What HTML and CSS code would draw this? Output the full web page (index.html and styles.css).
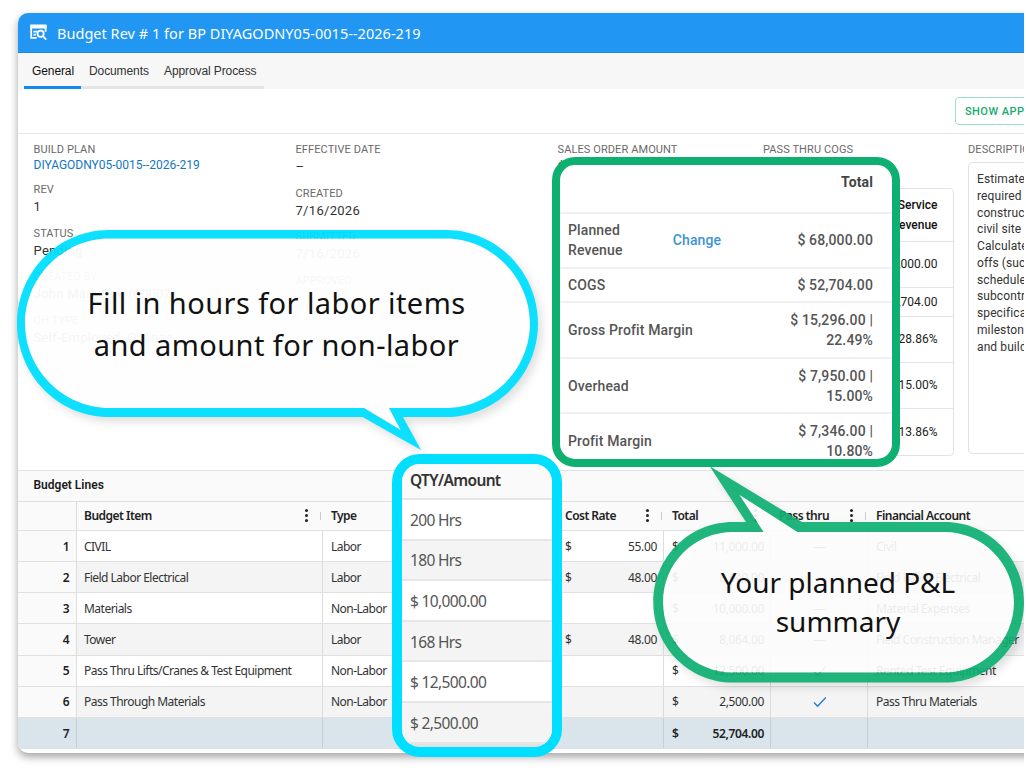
FILE: index.html
```html
<!DOCTYPE html>
<html lang="en">
<head>
  <meta charset="UTF-8" />
  <meta name="viewport" content="width=device-width, initial-scale=1.0"/>
  <title>Budget Rev # 1</title>
  <link rel="stylesheet" href="styles.css">
</head>
<body>
<div class="stage">
  <main class="window">
    <header class="title-bar">
      <svg class="title-icon" width="17" height="17" viewBox="0 0 17 17" fill="none" stroke="#fff" stroke-width="1.8">
        <path d="M1.2 14.5V1.2M15.6 1.2v6.6M.3 13.9h6.4M3.4 7.6h3.6M3.4 10.6h2.6"/>
        <path d="M.3 2.4h16.2" stroke-width="4"/>
        <circle cx="10.6" cy="9.8" r="3.1"/>
        <path d="M12.8 12l3.4 3.6"/>
      </svg>
      <h1>Budget Rev # 1 for BP DIYAGODNY05-0015--2026-219</h1>
    </header>

    <nav class="tabs">
      <a class="tab active">General</a>
      <a class="tab tab-docs">Documents</a>
      <a class="tab tab-approval">Approval Process</a>
    </nav>

    <div class="toolbar"><button class="show-btn">SHOW APPROVALS</button></div>

    <section class="details">
      <div class="col col-plan">
        <div class="field first"><label>BUILD PLAN</label><a class="link">DIYAGODNY05-0015--2026-219</a></div>
        <div class="field"><label>REV</label><span>1</span></div>
        <div class="field"><label>STATUS</label><span>Pending</span></div>
        <div class="field"><label>CREATED BY</label><span>John Mark Doe (00002)</span></div>
        <div class="field"><label>OH TYPE</label><span>Self-Employed &nbsp;<a>Change</a></span></div>
      </div>
      <div class="col col-dates">
        <div class="field"><label>EFFECTIVE DATE</label><span>–</span></div>
        <div class="field"><label>CREATED</label><span>7/16/2026</span></div>
        <div class="field"><label>SUBMITTED</label><span>7/16/2026</span></div>
        <div class="field"><label>APPROVED</label><span>–</span></div>
      </div>
      <div class="col col-money">
        <div class="money-row">
          <div class="field"><label>SALES ORDER AMOUNT</label><span>$ 68,000.00</span></div>
          <div class="field"><label>PASS THRU COGS</label></div>
        </div>
        <div class="service">
          <div class="service-row h53 head">Service<br>Revenue</div>
          <div class="service-row h46">$ 53,000.00</div>
          <div class="service-row h29">$ 37,704.00</div>
          <div class="service-row h46">28.86%</div>
          <div class="service-row h46">15.00%</div>
          <div class="service-row h46">13.86%</div>
        </div>
      </div>
      <div class="col col-desc">
        <label>DESCRIPTION</label>
        <div class="desc-box">Estimate<br>required to<br>construct<br>civil site p<br>Calculate<br>offs (such<br>schedule<br>subcontr<br>specifica<br>milestone<br>and build</div>
      </div>
    </section>

    <section class="lines">
      <h2>Budget Lines</h2>
      <div class="row row-head">
        <div class="c num"></div>
        <div class="c item">Budget Item<i class="dots"></i><i class="tick"></i></div>
        <div class="c type">Type</div>
        <div class="c qty"></div>
        <div class="c rate">Cost Rate<i class="dots"></i><i class="tick"></i></div>
        <div class="c total">Total<i class="dots"></i></div>
        <div class="c pass">Pass thru<i class="dots"></i><i class="tick"></i></div>
        <div class="c acct">Financial Account</div>
      </div>
      <div class="row">
        <div class="c num">1</div><div class="c item">CIVIL</div><div class="c type">Labor</div><div class="c qty"></div>
        <div class="c rate"><b>$</b>55.00</div><div class="c total"><b>$</b>11,000.00</div><div class="c pass">—</div><div class="c acct">Civil</div>
      </div>
      <div class="row alt">
        <div class="c num">2</div><div class="c item">Field Labor Electrical</div><div class="c type">Labor</div><div class="c qty"></div>
        <div class="c rate"><b>$</b>48.00</div><div class="c total"><b>$</b>8,640.00</div><div class="c pass">—</div><div class="c acct">Field Labor Electrical</div>
      </div>
      <div class="row">
        <div class="c num">3</div><div class="c item">Materials</div><div class="c type">Non-Labor</div><div class="c qty"></div>
        <div class="c rate"></div><div class="c total"><b>$</b>10,000.00</div><div class="c pass">—</div><div class="c acct">Material Expenses</div>
      </div>
      <div class="row alt">
        <div class="c num">4</div><div class="c item">Tower</div><div class="c type">Labor</div><div class="c qty"></div>
        <div class="c rate"><b>$</b>48.00</div><div class="c total"><b>$</b>8,064.00</div><div class="c pass">—</div><div class="c acct">Field Construction Manager</div>
      </div>
      <div class="row">
        <div class="c num">5</div><div class="c item">Pass Thru Lifts/Cranes &amp; Test Equipment</div><div class="c type">Non-Labor</div><div class="c qty"></div>
        <div class="c rate"></div><div class="c total"><b>$</b>12,500.00</div>
        <div class="c pass"><svg width="14" height="12" viewBox="0 0 14 12"><path d="M1 6.5l3.6 3.7L12.8 1.4" fill="none" stroke="#1b80d8" stroke-width="1.4"/></svg></div>
        <div class="c acct">Rented Test Equipment</div>
      </div>
      <div class="row alt">
        <div class="c num">6</div><div class="c item">Pass Through Materials</div><div class="c type">Non-Labor</div><div class="c qty"></div>
        <div class="c rate"></div><div class="c total"><b>$</b>2,500.00</div>
        <div class="c pass"><svg width="14" height="12" viewBox="0 0 14 12"><path d="M1 6.5l3.6 3.7L12.8 1.4" fill="none" stroke="#1b80d8" stroke-width="1.4"/></svg></div>
        <div class="c acct">Pass Thru Materials</div>
      </div>
      <div class="row sum">
        <div class="c num">7</div><div class="c item"></div><div class="c type"></div><div class="c qty"></div>
        <div class="c rate"></div><div class="c total"><b>$</b>52,704.00</div><div class="c pass"></div><div class="c acct"></div>
      </div>
    </section>
  </main>

  <!-- speech bubbles -->
  <svg class="bubbles" width="1024" height="768" viewBox="0 0 1024 768">
    <g class="bubble-shadow">
      <path fill="#fff" fill-opacity=".95" d="M109 238.5H446C491 238.5 530 277 530 323.5S491 408 446 408H389L400.7 430L364 408H109C64 408 25 370 25 323.5S64 238.5 109 238.5Z"/>
      <path fill="#00dfff" fill-opacity=".95" fill-rule="evenodd" d="M109 230H446C497 230 538 272 538 323.5S497 417 446 417H403L421 450L362.5 417H109C58 417 17 375 17 323.5S58 230 109 230Z
        M109 238.5C64 238.5 25 277 25 323.5S64 408 109 408H364L400.7 430L389 408H446C491 408 530 370 530 323.5S491 238.5 446 238.5Z"/>
    </g>
    <g class="bubble-shadow">
      <path fill="#fff" fill-opacity=".9" d="M733 532H763.5L739.3 494.7L797.5 532H945C983 532 1014 563 1014 602.3S983 672.6 945 672.6H733C694 672.6 663 641 663 602.3S694 532 733 532Z"/>
      <path fill="#0eb072" fill-opacity=".92" fill-rule="evenodd" d="M733 522H746L709.5 466L802 522H945C989 522 1024 558 1024 602.3S989 682.6 945 682.6H733C689 682.6 653.3 647 653.3 602.3S689 522 733 522Z
        M733 532C694 532 663 563 663 602.3S694 672.6 733 672.6H945C983 672.6 1014 641 1014 602.3S983 532 945 532H797.5L739.3 494.7L763.5 532Z"/>
    </g>
  </svg>
  <p class="say say-hours">Fill in hours for labor items<br>and amount for non-labor</p>
  <p class="say say-summary">Your planned P&amp;L<br>summary</p>

  <!-- magnified P&L table -->
  <div class="pl-card">
    <div class="pl-row pl-head"><span></span><strong>Total</strong></div>
    <div class="pl-row h55"><span>Planned<br>Revenue</span><a>Change</a><span>$ 68,000.00</span></div>
    <div class="pl-row h35"><span>COGS</span><span>$ 52,704.00</span></div>
    <div class="pl-row h55"><span>Gross Profit Margin</span><span>$ 15,296.00 |<br>22.49%</span></div>
    <div class="pl-row h55"><span>Overhead</span><span>$ 7,950.00 |<br>15.00%</span></div>
    <div class="pl-row h55"><span>Profit Margin</span><span>$ 7,346.00 |<br>10.80%</span></div>
  </div>

  <!-- magnified QTY column -->
  <div class="qty-card">
    <div class="qty-row qty-head">QTY/Amount</div>
    <div class="qty-row">200 Hrs</div>
    <div class="qty-row alt">180 Hrs</div>
    <div class="qty-row">$ 10,000.00</div>
    <div class="qty-row alt">168 Hrs</div>
    <div class="qty-row">$ 12,500.00</div>
    <div class="qty-row alt">$ 2,500.00</div>
  </div>
</div>
</body>
</html>
```
FILE: styles.css
```css
* {
  box-sizing: border-box;
}

body {
  margin: 0;
  background: #fff;
  font-family: Roboto, sans-serif;
  color: #333;
}

.stage {
  position: relative;
  width: 1024px;
  height: 768px;
  padding: 13px 0 0 18px;
  overflow: hidden;
}

/* Main window, runs off the right edge */
.window {
  width: 1040px;
  height: 740px;
  border-radius: 10px;
  background: #fff;
  box-shadow: 0 4px 9px rgba(0, 0, 0, 0.36);
  overflow: hidden;
}

.title-bar {
  display: flex;
  align-items: center;
  height: 40px;
  padding-left: 12px;
  background: #2196f3;
  border-bottom: 1px solid #1687e2;
}

.title-bar h1 {
  margin: 0 0 0 10px;
  font: 400 14.5px "Noto Sans", sans-serif;
  letter-spacing: 0.03px;
  color: #fff;
}

.tabs {
  display: flex;
  height: 36px;
  padding-left: 6px;
  background: #f7f7f7;
}

.tab {
  padding: 11px 8px 0;
  font: 12px/15px "Liberation Sans", Arial, sans-serif;
  letter-spacing: -0.1px;
  border-bottom: 3px solid #e4e4e4;
  white-space: nowrap;
}

.tab.active {
  width: 57px;
  color: #111;
  border-color: #1289ee;
}

.tab-docs {
  width: 75px;
}

.tab-approval {
  width: 108px;
}

.toolbar {
  height: 45px;
  padding: 8px 0 0 937px;
  border-bottom: 1px solid #e6e6e6;
}

.show-btn {
  width: 140px;
  height: 28px;
  padding: 0 0 0 9px;
  border: 1px solid #9fdfc7;
  border-radius: 4px;
  background: #fff;
  color: #12ab6e;
  font: 500 11px Roboto, sans-serif;
  letter-spacing: 0.45px;
  text-align: left;
  white-space: nowrap;
}

/* Details */
.details {
  display: flex;
  height: 336px;
  padding: 9px 0 0 15.5px;
}

.col {
  flex: none;
}

label {
  display: block;
  font-size: 11px;
  line-height: 14px;
  letter-spacing: 0.1px;
  color: #6a6a6a;
  white-space: nowrap;
}

.field {
  height: 43.7px;
}

.field.first {
  height: 40px;
}

.field span {
  display: block;
  font-size: 13px;
  line-height: 20px;
  letter-spacing: 0.3px;
}

.field .link {
  display: block;
  font-size: 12px;
  line-height: 17px;
  color: #1277c4;
}

.field a {
  color: #1277c4;
}

.col-plan {
  width: 262px;
}

.col-dates {
  width: 262px;
}

.col-money {
  width: 410.5px;
}

.money-row {
  display: grid;
  grid-template-columns: 205.5px auto;
}

.service {
  width: 396px;
  margin-top: 1.5px;
  border: 1px solid #e2e2e2;
  border-radius: 4px;
}

.service-row {
  display: flex;
  align-items: center;
  justify-content: flex-end;
  padding-right: 15px;
  font-size: 12px;
  line-height: 20px;
  text-align: right;
  border-bottom: 1px solid #e4e4e4;
  color: #222;
}

.service-row:last-child {
  border-bottom: 0;
}

.head {
  font-weight: 500;
  color: #111;
}

.h53 { height: 52.5px; }
.h46 { height: 46px; }
.h29 { height: 29px; }

.desc-box {
  width: 160px;
  height: 292px;
  margin-top: 5px;
  padding: 8px;
  border: 1px solid #e2e2e2;
  border-radius: 4px;
  font-size: 12px;
  line-height: 16.75px;
  letter-spacing: 0.1px;
}

/* Budget lines grid */
.lines {
  font-family: "Noto Sans", "Open Sans", sans-serif;
  font-size: 12px;
}

.lines h2 {
  height: 32px;
  margin: 0;
  padding-left: 15.5px;
  font: 600 12px/29px Roboto, sans-serif;
  color: #1b1b1b;
  background: #fafafa;
  border-top: 1px solid #e2e2e2;
  border-bottom: 1px solid #dedede;
}

.row {
  display: flex;
  height: 31.17px;
  border-bottom: 1px solid #e0e0e0;
  letter-spacing: -0.52px;
}

.row-head {
  height: 29px;
  background: #fafafa;
  font-weight: 600;
  color: #222;
}

.row-head .c {
  padding-bottom: 1px;
}

.alt {
  background: #f4f4f4;
}

.sum {
  background: #dae4eb;
  font-weight: 600;
  color: #222;
}

.c {
  display: flex;
  flex: none;
  align-items: center;
  padding: 0 7px;
  border-right: 1px solid #dcdcdc;
  white-space: nowrap;
}

.sum .c {
  border-color: #c5d0d9;
}

.row-head .c {
  border-color: transparent;
}

.row-head .num {
  border-color: #dcdcdc;
}

.num {
  width: 59px;
  justify-content: flex-end;
  font-weight: 600;
  color: #222;
  background: #fafafa;
}

.sum .num {
  background: none;
}

.item { width: 246px; }
.type { width: 71px; padding-left: 8px; }
.qty { width: 153px; }
.rate { width: 117px; padding-left: 18px; }
.total { width: 107px; padding-left: 8px; }
.pass { width: 97px; padding-left: 8px; }
.acct { width: 190px; padding-left: 8px; }

.type,
.qty {
  border-right: 0;
}

/* amounts keep looser digits than the labels */
.row:not(.row-head) .rate,
.row:not(.row-head) .total {
  justify-content: flex-end;
  padding-right: 6px;
  letter-spacing: -0.35px;
}

.row:not(.row-head) .pass {
  justify-content: center;
}

.c b {
  margin-right: auto;
  font-weight: inherit;
}

.dots {
  width: 3px;
  height: 3px;
  margin: 0 12px 0 auto;
  border-radius: 50%;
  background: #222;
  box-shadow: 0 -5px #222, 0 5px #222;
}

.dots:last-child {
  margin-right: 6px;
}

.tick {
  width: 1.5px;
  height: 8px;
  margin-right: -6px;
  background: #ccc;
}

/* Callouts over the window */
.bubbles {
  position: absolute;
  left: 0;
  top: 0;
}

.bubble-shadow {
  filter: drop-shadow(4px 5px 4px rgba(0, 0, 0, 0.13));
}

.say {
  position: absolute;
  margin: 0;
  font-family: "Noto Sans", "Open Sans", sans-serif;
  color: #111;
  text-align: center;
  white-space: nowrap;
}

.say-hours {
  left: 26px;
  top: 282px;
  width: 501px;
  font-size: 29px;
  line-height: 42px;
  letter-spacing: 0.42px;
}

.say-summary {
  left: 663px;
  top: 563px;
  width: 350px;
  font-size: 28px;
  line-height: 39px;
}

.pl-card {
  position: absolute;
  left: 552px;
  top: 157px;
  width: 348px;
  height: 310px;
  border: 8px solid #0eb072;
  border-radius: 23px;
  background: #fff;
  overflow: hidden;
  font-size: 14px;
  font-weight: 500;
  line-height: 20px;
  letter-spacing: 0.13px;
  color: #555;
}

.pl-row {
  position: relative;
  display: flex;
  align-items: center;
  justify-content: space-between;
  padding: 0 19px 0 8px;
  border-bottom: 2px solid #f0f0f0;
}

.pl-row span:last-child {
  text-align: right;
}

.pl-row a {
  margin-left: -26px;
  color: #3c93d8;
}

.pl-head {
  height: 48.5px;
  padding-bottom: 13px;
  color: #444;
}

.h55 { height: 55.4px; }
.h35 { height: 34.6px; }

.qty-card {
  position: absolute;
  left: 392px;
  top: 454px;
  width: 170px;
  height: 303px;
  border: 10px solid #00dfff;
  border-radius: 28px;
  background: #dfe3e6;
  overflow: hidden;
  font-family: "Noto Sans", "Open Sans", sans-serif;
  font-size: 15.5px;
  color: #555;
}

.qty-row {
  display: flex;
  align-items: center;
  height: 40.6px;
  padding: 1px 0 0 8px;
  border-bottom: 2px solid #e6e6e6;
  background: #fff;
  letter-spacing: -0.65px;
}

.qty-row.alt {
  background: #f4f4f4;
}

.qty-head {
  height: 36px;
  padding: 0 0 3px 8px;
  background: #fafafa;
  font-weight: 600;
  color: #333;
}
```
